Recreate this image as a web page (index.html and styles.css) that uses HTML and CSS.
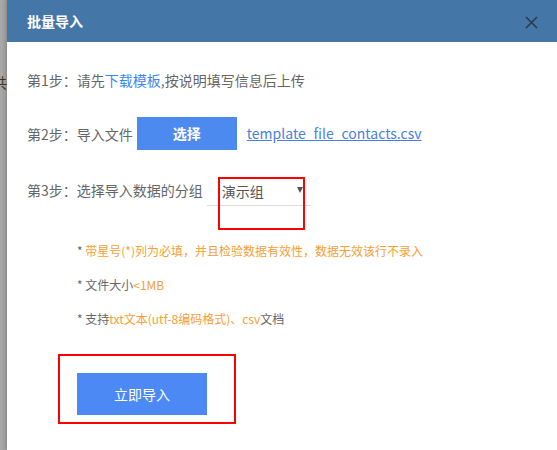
FILE: index.html
```html
<!DOCTYPE html>
<html>

<head>
	<meta http-equiv="Content-Type" content="text/html; charset=utf-8" />
	<title>批量导入</title>
	<link rel="stylesheet" href="styles.css">
</head>

<body>
	<div class="page">
		<div class="backdrop">
			<span class="behind">共</span>
		</div>
		<div class="dialog">
			<div class="dialog-head">
				<span class="dialog-title">批量导入</span>
				<a class="dialog-close" href="javascript:;">
					<svg width="13" height="13" viewBox="0 0 13 13">
						<path d="M1 1 L12 12 M12 1 L1 12" stroke="#2a3a4c" stroke-width="1.6" fill="none" />
					</svg>
				</a>
			</div>
			<div class="dialog-body">
				<div class="step step-1">第1步：请先<a class="link" href="javascript:;">下载模板</a>,按说明填写信息后上传</div>
				<div class="step step-2">
					<span>第2步：导入文件</span>
					<a class="btn-pick" href="javascript:;">选择</a>
					<a class="file-name" href="javascript:;">template_file_contacts.csv</a>
				</div>
				<div class="step step-3">
					<span>第3步：选择导入数据的分组</span>
					<div class="group-select">
						<span class="group-value">演示组</span>
						<i class="caret"></i>
						<div class="mark mark-select"></div>
					</div>
				</div>
				<ul class="notes">
					<li>* <em>带星号(*)列为必填，并且检验数据有效性，数据无效该行不录入</em></li>
					<li>* 文件大小<em>&lt;1MB</em></li>
					<li>* 支持<em>txt文本(utf-8编码格式)、csv</em>文档</li>
				</ul>
				<div class="mark-submit">
					<a class="btn-submit" href="javascript:;">立即导入</a>
				</div>
			</div>
		</div>
	</div>
</body>

</html>
```

FILE: styles.css
```css
body,
div,
ul,
li,
p {
	margin: 0;
	padding: 0;
}

body {
	color: #666;
	font: 14px/20px "Noto Sans CJK SC", "Liberation Sans", sans-serif;
	background: #a4a4a4;
	overflow: hidden;
}

ul {
	list-style-type: none;
}

a {
	text-decoration: none;
}

em {
	font-style: normal;
}

.page {
	display: flex;
	height: 450px;
}

.backdrop {
	width: 7px;
	flex: none;
	overflow: hidden;
	display: flex;
	justify-content: flex-end;
	background: linear-gradient(to right, #a9a9a9, #9c9c9c);
}

.behind {
	padding-top: 72px;
	color: #3a3320;
	font-size: 14px;
	white-space: nowrap;
}

.dialog {
	width: 560px;
	flex: none;
	background: #fff;
	box-shadow: -1px 0 3px rgba(0, 0, 0, 0.15);
}

.dialog-head {
	height: 42px;
	background: #4476a7;
	display: flex;
	align-items: center;
	justify-content: space-between;
	padding: 0 0 0 20px;
}

.dialog-title {
	color: #fff;
	font-weight: bold;
	font-size: 14px;
	margin-top: -1px;
}

.dialog-close {
	display: flex;
	width: 13px;
	height: 13px;
	margin-right: 29px;
	margin-top: 2px;
}

.dialog-body {
	padding: 28px 0 0 20px;
}

.step {
	display: flex;
	align-items: center;
}

.step-2 {
	margin-top: 27px;
}

.step-3 {
	margin-top: 27px;
	align-items: flex-start;
}

.step-3 > span {
	margin-top: 3px;
}

.link {
	color: #3d86f2;
}

.btn-pick {
	width: 100px;
	height: 33px;
	line-height: 33px;
	margin-left: 4px;
	text-align: center;
	color: #fff;
	font-weight: bold;
	background: #4d8af0;
}

.file-name {
	margin-left: 10px;
	color: #4a7fdc;
	font-size: 14px;
	text-decoration: underline;
	margin-top: -2px;
}

.group-select {
	position: relative;
	width: 104px;
	height: 29px;
	margin-left: 4px;
	border-bottom: 1px solid #dcdcdc;
	display: flex;
	align-items: center;
	justify-content: space-between;
	padding: 0 8px 0 15px;
	box-sizing: border-box;
	color: #555;
}

.caret {
	width: 0;
	height: 0;
	border-left: 3px solid transparent;
	border-right: 3px solid transparent;
	border-top: 6px solid #555;
	margin-top: -2px;
}

.mark {
	position: absolute;
	border: 2px solid #f00;
}

.mark-select {
	left: 11px;
	top: 0;
	width: 83px;
	height: 49px;
}

.notes {
	margin: 35px 0 0 50px;
	font-size: 12px;
	line-height: 20px;
	color: #666;
}

.notes li + li {
	margin-top: 14px;
}

.notes em {
	color: #f6a035;
}

.mark-submit {
	display: inline-block;
	margin: 25px 0 0 31px;
	padding: 17px 27px 7px 17px;
	border: 2px solid #f00;
}

.btn-submit {
	display: block;
	width: 130px;
	height: 42px;
	line-height: 42px;
	text-align: center;
	color: #fff;
	font-size: 14px;
	background: #4c89f4;
}
```
